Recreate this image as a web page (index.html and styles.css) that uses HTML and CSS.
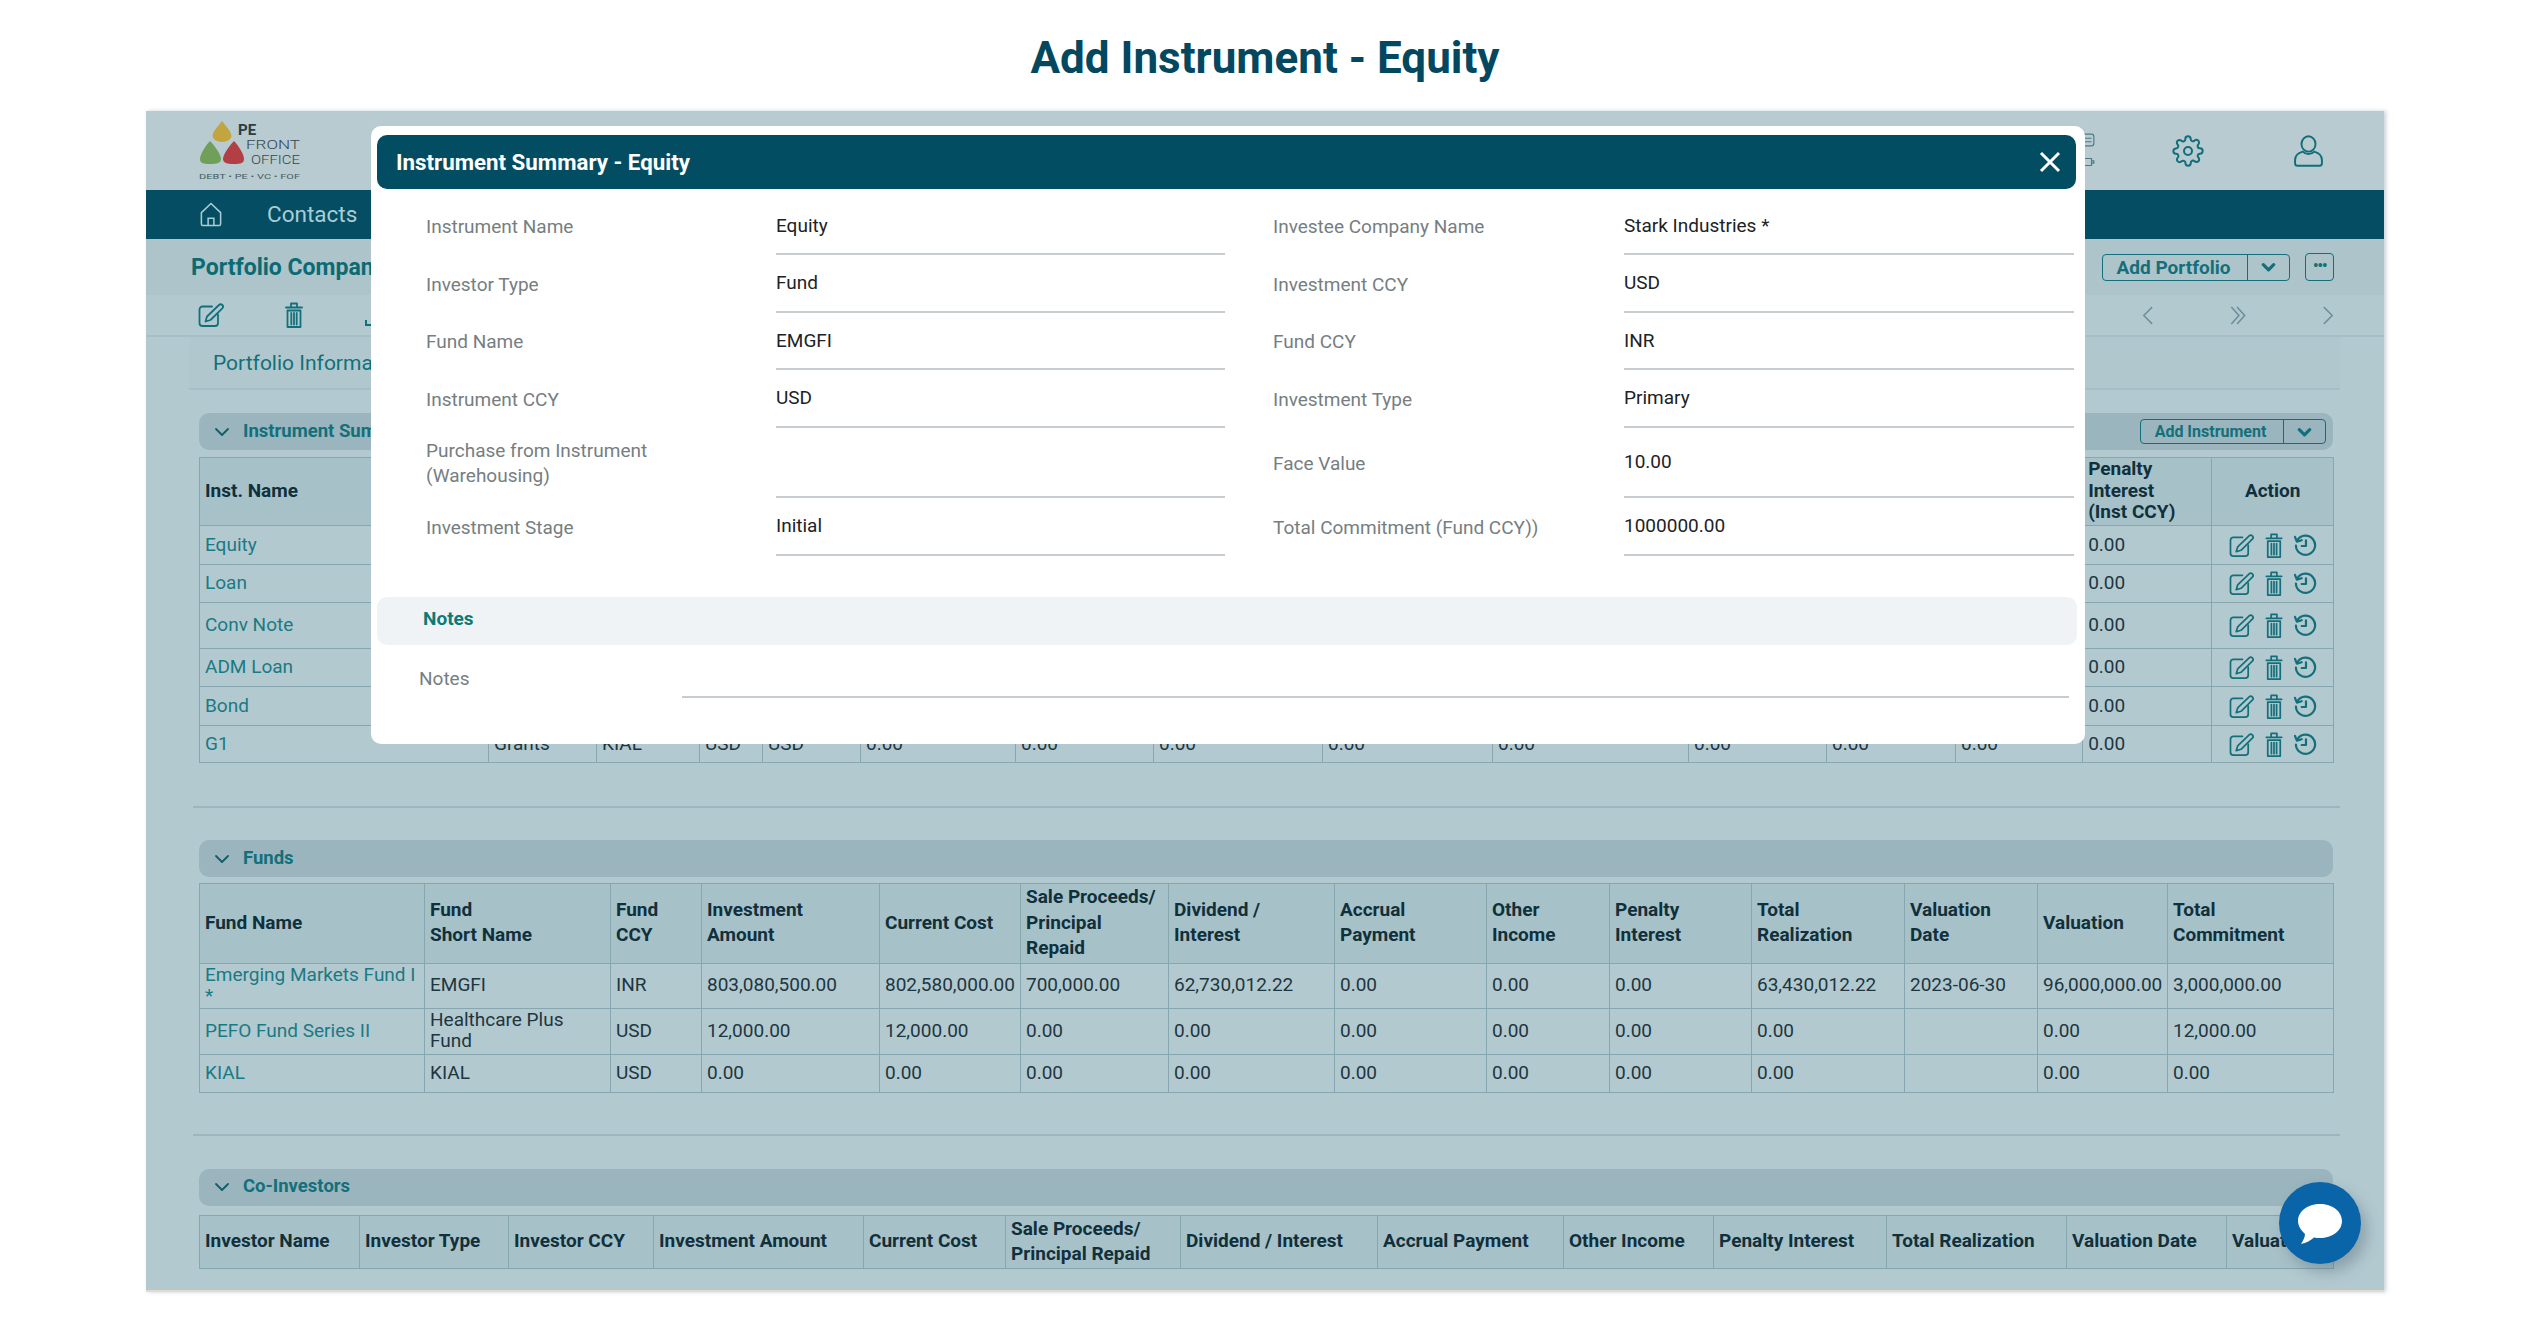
FILE: index.html
```html
<!DOCTYPE html>
<html lang="en">
<head>
  <meta charset="UTF-8">
  <title>Add Instrument - Equity</title>
  <link rel="stylesheet" href="styles.css">
</head>
<body>

  <svg class="sprites" width="0" height="0">
    <symbol id="i-edit" viewBox="0 0 26 24">
      <path d="M14 3.5H4.5A3 3 0 0 0 1.500 6.500V20a3 3 0 0 0 3 3H17a3 3 0 0 0 3-3v-8.500"/>
      <path d="M21 2a2.300 2.300 0 0 1 3.300 3.300L12.500 17l-5 1.500L9 13.500z"/>
    </symbol>
    <symbol id="i-trash" viewBox="0 0 18 26">
      <path d="M1 5.500h16M6 5V1.500h6V5"/>
      <path d="M2.500 8.500h13V25h-13zM6.300 11v11.500M9 11v11.500M11.700 11v11.500"/>
    </symbol>
    <symbol id="i-history" viewBox="0 0 24 24">
      <path d="M3.500 6.500A10 10 0 1 1 2 12"/>
      <path d="M1 3l2 5 5-1.500" />
      <path d="M12.500 6.500v6H8"/>
    </symbol>
    <symbol id="i-chevron" viewBox="0 0 16 10">
      <path d="M2 2l6 6 6-6"/>
    </symbol>
    <symbol id="i-chevron-bold" viewBox="0 0 16 10">
      <path d="M2.500 2.500L8 8l5.500-5.500"/>
    </symbol>
  </svg>

  <h1 class="page-title">Add Instrument - Equity</h1>

  <div class="frame">

    <header class="topbar">
      <svg class="logo" viewBox="0 0 102 60">
        <path class="drop-y" d="M23 0c4 5 9.500 11 9.500 15a9.500 6 0 0 1-19 0C13.500 11 19 5 23 0z"/>
        <path class="drop-g" d="M11 20c4 4 11 13 11 18 0 4-4 5-11 5S1 42 1 38c0-5 6-14 10-18z"/>
        <path class="drop-r" d="M35 20c4 4 10 13 10 18 0 4-3 5-10 5s-11-1-11-5c0-5 7-14 11-18z"/>
        <text class="logo-pe" x="39" y="14">PE</text>
        <text class="logo-word" x="47" y="28" textLength="54" lengthAdjust="spacingAndGlyphs">FRONT</text>
        <text class="logo-word" x="52" y="43" textLength="49" lengthAdjust="spacingAndGlyphs">OFFICE</text>
        <text class="logo-tag" x="0" y="58" textLength="101" lengthAdjust="spacingAndGlyphs">DEBT • PE • VC • FOF</text>
      </svg>
      <div class="top-icons">
        <div class="peek-icons">
          <svg viewBox="0 0 12 12"><rect x="1" y="1" width="10" height="10" rx="2"/><path d="M3 4.500h6M3 7.500h6"/></svg>
          <svg viewBox="0 0 12 12"><path d="M2 3h7v6H2zM9 5h2v2H9z"/></svg>
        </div>
        <svg class="top-icon gear" viewBox="0 0 24 24">
          <circle cx="12" cy="12" r="3"/>
          <path d="M19.400 15a1.650 1.650 0 0 0 .33 1.820l.06.06a2 2 0 0 1 0 2.830 2 2 0 0 1-2.830 0l-.06-.06a1.650 1.650 0 0 0-1.820-.33 1.650 1.650 0 0 0-1 1.510V21a2 2 0 0 1-2 2 2 2 0 0 1-2-2v-.09A1.650 1.650 0 0 0 9 19.400a1.650 1.650 0 0 0-1.820.33l-.06.06a2 2 0 0 1-2.830 0 2 2 0 0 1 0-2.830l.06-.06a1.650 1.650 0 0 0 .33-1.820 1.650 1.650 0 0 0-1.510-1H3a2 2 0 0 1-2-2 2 2 0 0 1 2-2h.09A1.650 1.650 0 0 0 4.600 9a1.650 1.650 0 0 0-.33-1.820l-.06-.06a2 2 0 0 1 0-2.830 2 2 0 0 1 2.830 0l.06.06a1.650 1.650 0 0 0 1.820.33H9a1.650 1.650 0 0 0 1-1.510V3a2 2 0 0 1 2-2 2 2 0 0 1 2 2v.09a1.650 1.650 0 0 0 1 1.510 1.650 1.650 0 0 0 1.820-.33l.06-.06a2 2 0 0 1 2.830 0 2 2 0 0 1 0 2.830l-.06.06a1.650 1.650 0 0 0-.33 1.820V9a1.650 1.650 0 0 0 1.510 1H21a2 2 0 0 1 2 2 2 2 0 0 1-2 2h-.09a1.650 1.650 0 0 0-1.510 1z"/>
        </svg>
        <svg class="top-icon user" viewBox="0 0 24 25">
          <ellipse cx="12" cy="7" rx="5.500" ry="6"/>
          <path d="M7.500 13C4 14 1.500 16 1.500 19.500V22a2 2 0 0 0 2 2h17a2 2 0 0 0 2-2v-2.500C22.500 16 20 14 16.500 13c-2.500 2.500-6.500 2.500-9 0z"/>
        </svg>
      </div>
    </header>

    <nav class="navbar">
      <svg class="home" viewBox="0 0 24 26">
        <path d="M12 1.500L2 11v12a1.500 1.500 0 0 0 1.500 1.500h17A1.500 1.500 0 0 0 22 23V11z"/>
        <path d="M9 24.500V17h6v7.500"/>
      </svg>
      <a class="nav-link">Contacts</a>
    </nav>

    <div class="pagebar">
      <h2 class="page-name">Portfolio Company</h2>
      <div class="page-actions">
        <div class="split-btn">
          <span class="split-label">Add Portfolio</span>
          <span class="split-arrow"><svg><use href="#i-chevron-bold"/></svg></span>
        </div>
        <div class="more-btn">•••</div>
      </div>
    </div>

    <div class="toolbar">
      <div class="tool-left">
        <svg class="tool-edit"><use href="#i-edit"/></svg>
        <svg class="tool-trash"><use href="#i-trash"/></svg>
        <svg class="tool-upload" viewBox="0 0 24 24"><path d="M2 17v5h20v-5M12 2v14"/></svg>
      </div>
      <div class="pager">
        <svg viewBox="0 0 14 22"><path d="M12 2L3 11l9 9"/></svg>
        <svg viewBox="0 0 18 22"><path d="M2 2l8 9-8 9M8 2l8 9-8 9"/></svg>
        <svg viewBox="0 0 14 22"><path d="M2 2l9 9-9 9"/></svg>
      </div>
    </div>

    <div class="tab-card">Portfolio Information</div>

    <section class="section first">
      <div class="section-head">
        <svg class="chev"><use href="#i-chevron"/></svg>
        <span class="section-title">Instrument Summary</span>
        <div class="split-btn small">
          <span class="split-label">Add Instrument</span>
          <span class="split-arrow"><svg><use href="#i-chevron-bold"/></svg></span>
        </div>
      </div>
      <table class="grid inst">
        <colgroup><col><col><col><col><col><col><col><col><col><col><col><col><col><col><col></colgroup>
        <thead>
          <tr><th>Inst. Name</th><th colspan="12"></th><th>Penalty<br>Interest<br>(Inst CCY)</th><th class="center">Action</th></tr>
        </thead>
        <tbody>
          <tr><td><a>Equity</a></td><td colspan="12"></td><td>0.00</td><td><div class="acts"><svg class="a-edit"><use href="#i-edit"/></svg><svg class="a-trash"><use href="#i-trash"/></svg><svg class="a-hist"><use href="#i-history"/></svg></div></td></tr>
          <tr><td><a>Loan</a></td><td colspan="12"></td><td>0.00</td><td><div class="acts"><svg class="a-edit"><use href="#i-edit"/></svg><svg class="a-trash"><use href="#i-trash"/></svg><svg class="a-hist"><use href="#i-history"/></svg></div></td></tr>
          <tr><td><a>Conv Note</a></td><td colspan="12"></td><td>0.00</td><td><div class="acts"><svg class="a-edit"><use href="#i-edit"/></svg><svg class="a-trash"><use href="#i-trash"/></svg><svg class="a-hist"><use href="#i-history"/></svg></div></td></tr>
          <tr><td><a>ADM Loan</a></td><td colspan="12"></td><td>0.00</td><td><div class="acts"><svg class="a-edit"><use href="#i-edit"/></svg><svg class="a-trash"><use href="#i-trash"/></svg><svg class="a-hist"><use href="#i-history"/></svg></div></td></tr>
          <tr><td><a>Bond</a></td><td colspan="12"></td><td>0.00</td><td><div class="acts"><svg class="a-edit"><use href="#i-edit"/></svg><svg class="a-trash"><use href="#i-trash"/></svg><svg class="a-hist"><use href="#i-history"/></svg></div></td></tr>
          <tr><td><a>G1</a></td><td>Grants</td><td>KIAL</td><td>USD</td><td>USD</td><td>0.00</td><td>0.00</td><td>0.00</td><td>0.00</td><td>0.00</td><td>0.00</td><td>0.00</td><td>0.00</td><td>0.00</td><td><div class="acts"><svg class="a-edit"><use href="#i-edit"/></svg><svg class="a-trash"><use href="#i-trash"/></svg><svg class="a-hist"><use href="#i-history"/></svg></div></td></tr>
        </tbody>
      </table>
    </section>

    <hr class="divider one">

    <section class="section">
      <div class="section-head">
        <svg class="chev"><use href="#i-chevron"/></svg>
        <span class="section-title">Funds</span>
      </div>
      <table class="grid funds">
        <colgroup><col><col><col><col><col><col><col><col><col><col><col><col><col><col></colgroup>
        <thead>
          <tr>
            <th>Fund Name</th><th>Fund<br>Short Name</th><th>Fund<br>CCY</th><th>Investment<br>Amount</th><th>Current Cost</th><th>Sale Proceeds/<br>Principal<br>Repaid</th><th>Dividend /<br>Interest</th><th>Accrual<br>Payment</th><th>Other<br>Income</th><th>Penalty<br>Interest</th><th>Total<br>Realization</th><th>Valuation<br>Date</th><th>Valuation</th><th>Total<br>Commitment</th>
          </tr>
        </thead>
        <tbody>
          <tr><td><a>Emerging Markets Fund I *</a></td><td>EMGFI</td><td>INR</td><td>803,080,500.00</td><td>802,580,000.00</td><td>700,000.00</td><td>62,730,012.22</td><td>0.00</td><td>0.00</td><td>0.00</td><td>63,430,012.22</td><td>2023-06-30</td><td>96,000,000.00</td><td>3,000,000.00</td></tr>
          <tr><td><a>PEFO Fund Series II</a></td><td>Healthcare Plus Fund</td><td>USD</td><td>12,000.00</td><td>12,000.00</td><td>0.00</td><td>0.00</td><td>0.00</td><td>0.00</td><td>0.00</td><td>0.00</td><td></td><td>0.00</td><td>12,000.00</td></tr>
          <tr><td><a>KIAL</a></td><td>KIAL</td><td>USD</td><td>0.00</td><td>0.00</td><td>0.00</td><td>0.00</td><td>0.00</td><td>0.00</td><td>0.00</td><td>0.00</td><td></td><td>0.00</td><td>0.00</td></tr>
        </tbody>
      </table>
    </section>

    <hr class="divider two">

    <section class="section">
      <div class="section-head">
        <svg class="chev"><use href="#i-chevron"/></svg>
        <span class="section-title">Co-Investors</span>
      </div>
      <table class="grid coinv">
        <colgroup><col><col><col><col><col><col><col><col><col><col><col><col><col></colgroup>
        <thead>
          <tr>
            <th>Investor Name</th><th>Investor Type</th><th>Investor CCY</th><th>Investment Amount</th><th>Current Cost</th><th>Sale Proceeds/<br>Principal Repaid</th><th>Dividend / Interest</th><th>Accrual Payment</th><th>Other Income</th><th>Penalty Interest</th><th>Total Realization</th><th>Valuation Date</th><th>Valuation</th>
          </tr>
        </thead>
      </table>
    </section>

    <div class="modal">
      <div class="modal-head">
        <span class="modal-title">Instrument Summary - Equity</span>
        <svg class="modal-close" viewBox="0 0 22 22"><path d="M2 2l18 18M20 2L2 20"/></svg>
      </div>
      <div class="form">
        <div class="field"><label>Instrument Name</label><div class="value">Equity</div></div>
        <div class="field"><label>Investee Company Name</label><div class="value">Stark Industries *</div></div>
        <div class="field"><label>Investor Type</label><div class="value">Fund</div></div>
        <div class="field"><label>Investment CCY</label><div class="value">USD</div></div>
        <div class="field"><label>Fund Name</label><div class="value">EMGFI</div></div>
        <div class="field"><label>Fund CCY</label><div class="value">INR</div></div>
        <div class="field"><label>Instrument CCY</label><div class="value">USD</div></div>
        <div class="field"><label>Investment Type</label><div class="value">Primary</div></div>
        <div class="field"><label>Purchase from Instrument<br>(Warehousing)</label><div class="value"></div></div>
        <div class="field"><label>Face Value</label><div class="value">10.00</div></div>
        <div class="field"><label>Investment Stage</label><div class="value">Initial</div></div>
        <div class="field"><label>Total Commitment (Fund CCY))</label><div class="value">1000000.00</div></div>
      </div>
      <div class="notes-bar">Notes</div>
      <div class="notes-row"><label>Notes</label><div class="notes-line"></div></div>
    </div>

    <div class="chat-btn">
      <svg viewBox="0 0 44 44"><path d="M22 3c12 0 22 7 22 17s-10 17-22 17c-2 0-4 0-6-.6C13 39 8 42 3 43c2-3 4-7 4-10C3 29 0 25 0 20 0 10 10 3 22 3z"/></svg>
    </div>
  </div>

</body>
</html>
```
FILE: styles.css
```css
* {
  box-sizing: border-box;
}

body {
  margin: 0;
  height: 1330px;
  overflow: hidden;
  background: #fff;
  font-family: Roboto, "Liberation Sans", sans-serif;
  font-size: 19px;
  color: #1d3640;
}

.sprites {
  position: absolute;
}

symbol path,
symbol circle {
  fill: none;
  stroke: currentColor;
  stroke-width: 1.8;
  stroke-linejoin: round;
  stroke-linecap: round;
}

#i-history path {
  stroke-width: 2.3;
}

#i-chevron-bold path {
  stroke-width: 3.4;
}

.page-title {
  margin: 0;
  height: 111px;
  padding-top: 33px;
  text-align: center;
  font-size: 44px;
  line-height: 50px;
  font-weight: 700;
  color: #03485f;
}

.frame {
  position: relative;
  width: 2238px;
  height: 1181px;
  margin-left: 146px;
  overflow: hidden;
  background: #b3c9d0;
  border-bottom: 2px solid #e3dacb;
  box-shadow: 2px 0 4px rgba(120, 140, 150, 0.4);
}

/* top header */
.topbar {
  display: flex;
  justify-content: space-between;
  align-items: center;
  height: 79px;
  padding: 0 60px 0 53px;
  background: #b7cbd1;
}

.logo {
  width: 102px;
  height: 60px;
}

.drop-y { fill: #c2a53f; }
.drop-g { fill: #6f9f59; }
.drop-r { fill: #b23f44; }

.logo-pe {
  font-size: 15px;
  font-weight: 700;
  fill: #2b3d44;
}

.logo-word {
  font-size: 13px;
  font-weight: 300;
  fill: #33474e;
}

.logo-tag {
  font-size: 7px;
  fill: #485c63;
}

.top-icons {
  display: flex;
  align-items: center;
}

.peek-icons {
  display: flex;
  flex-direction: column;
  gap: 8px;
  margin-right: 77px;
}

.peek-icons svg {
  width: 14px;
  height: 14px;
  fill: none;
  stroke: #4c7d87;
  stroke-width: 1;
}

.top-icon {
  fill: none;
  stroke: #116e78;
  stroke-width: 1.5;
}

.gear {
  width: 32px;
  height: 32px;
  margin-right: 89px;
}

.user {
  width: 31px;
  height: 32px;
}

/* nav */
.navbar {
  display: flex;
  align-items: center;
  height: 49px;
  padding-left: 53px;
  background: #044d63;
}

.home {
  width: 24px;
  height: 25px;
  fill: none;
  stroke: #a9cdd4;
  stroke-width: 1.6;
}

.nav-link {
  margin-left: 44px;
  padding-bottom: 1px;
  font-size: 22.5px;
  color: #a9cdd4;
}

/* page bar */
.pagebar {
  display: flex;
  justify-content: space-between;
  align-items: center;
  height: 56px;
  padding: 0 50px 0 45px;
  background: #adc4cb;
}

.page-name {
  margin: 0;
  font-size: 23px;
  font-weight: 700;
  color: #0b6b72;
}

.page-actions {
  display: flex;
  align-items: center;
  gap: 15px;
}

.split-btn {
  display: flex;
  align-items: stretch;
  width: 188px;
  height: 27px;
  border: 1px solid #13707a;
  border-radius: 4px;
  font-weight: 700;
  font-size: 19px;
  color: #13707a;
}

.split-label {
  width: 145px;
  padding-right: 3px;
  border-right: 1px solid #13707a;
  text-align: center;
  line-height: 25px;
}

.split-arrow {
  display: flex;
  flex: 1;
  align-items: center;
  justify-content: center;
}

.split-arrow svg {
  width: 15px;
  height: 10px;
  color: #13707a;
}

.split-btn.small {
  width: 186px;
  height: 25px;
  margin-left: auto;
  margin-right: 7px;
  font-size: 16px;
}

.small .split-label {
  width: 143px;
  line-height: 23px;
}

.more-btn {
  width: 29px;
  height: 28px;
  border: 1px solid #13707a;
  border-radius: 4px;
  text-align: center;
  font-size: 18px;
  line-height: 24px;
  letter-spacing: -1.5px;
  white-space: nowrap;
  color: #13707a;
}

/* toolbar */
.toolbar {
  display: flex;
  justify-content: space-between;
  align-items: center;
  height: 42px;
  padding: 0 49px 0 52px;
  border-bottom: 2px solid #a6bec6;
}

.tool-left {
  display: flex;
  align-items: center;
  gap: 61px;
  color: #13707a;
}

.tool-edit {
  width: 26px;
  height: 24px;
}

.tool-trash {
  width: 18px;
  height: 26px;
}

.tool-upload {
  width: 24px;
  height: 24px;
  fill: none;
  stroke: currentColor;
  stroke-width: 2;
}

.pager {
  display: flex;
  align-items: center;
  gap: 75px;
}

.pager svg {
  width: 13px;
  height: 21px;
  fill: none;
  stroke: #6b8f99;
  stroke-width: 1.6;
}

.pager svg:nth-child(2) {
  width: 18px;
}

.tab-card {
  width: 2151px;
  height: 53px;
  margin-left: 43px;
  padding: 14px 0 0 24px;
  background: #b0c7ce;
  border-bottom: 2px solid #a6bec6;
  font-size: 21px;
  color: #12707a;
}

/* sections */
.section {
  width: 2134px;
  margin-left: 53px;
}

.section.first {
  margin-top: 23px;
}

.section-head {
  display: flex;
  align-items: center;
  height: 37px;
  padding-left: 15px;
  background: #9ab5be;
  border-radius: 10px;
  color: #12707a;
}

.chev {
  width: 16px;
  height: 10px;
  margin-right: 13px;
  color: #0f5e68;
}

.section-title {
  padding-bottom: 2px;
  font-size: 18.5px;
  font-weight: 700;
}

.divider {
  width: 2147px;
  height: 2px;
  margin: 0 0 0 47px;
  border: none;
  background: #9db6be;
}

.divider.one {
  margin-top: 43px;
  margin-bottom: 32px;
}

.divider.two {
  margin-top: 41px;
  margin-bottom: 33px;
}

/* tables */
.grid {
  table-layout: fixed;
  border-collapse: collapse;
  width: 2134px;
  margin-top: 6px;
}

.grid th,
.grid td {
  padding: 0 5px 2px;
  border: 1px solid #86a6b0;
  vertical-align: middle;
  text-align: left;
  overflow: hidden;
}

.grid th {
  background: #a7c1c9;
  font-weight: 700;
  line-height: 25.500px;
  color: #10303b;
}

.grid td {
  line-height: 21px;
}

.grid a {
  color: #1a7a83;
}

.grid th.center {
  text-align: center;
}

.inst {
  margin-top: 7px;
}

.inst th {
  height: 68px;
  line-height: 21.500px;
}

.inst tbody tr:nth-child(1) td { height: 39px; }
.inst tbody tr:nth-child(2) td { height: 38px; }
.inst tbody tr:nth-child(3) td { height: 46px; }
.inst tbody tr:nth-child(4) td { height: 38px; }
.inst tbody tr:nth-child(5) td { height: 39px; }
.inst tbody tr:nth-child(6) td { height: 37px; }

.inst col:nth-child(1) { width: 289px; }
.inst col:nth-child(2) { width: 108px; }
.inst col:nth-child(3) { width: 103px; }
.inst col:nth-child(4) { width: 63px; }
.inst col:nth-child(5) { width: 98px; }
.inst col:nth-child(6) { width: 155px; }
.inst col:nth-child(7) { width: 138px; }
.inst col:nth-child(8) { width: 169px; }
.inst col:nth-child(9) { width: 170px; }
.inst col:nth-child(10) { width: 196px; }
.inst col:nth-child(11) { width: 138px; }
.inst col:nth-child(12) { width: 129px; }
.inst col:nth-child(13) { width: 127px; }
.inst col:nth-child(14) { width: 129px; }
.inst col:nth-child(15) { width: 122px; }

.acts {
  display: flex;
  align-items: center;
  justify-content: center;
  gap: 11px;
  height: 25px;
  margin-top: 2px;
  color: #13707a;
}

.a-edit {
  width: 25px;
  height: 23px;
}

.a-trash {
  width: 18px;
  height: 25px;
}

.a-hist {
  width: 23px;
  height: 23px;
}

.funds th {
  height: 78px;
}

.funds tbody tr:nth-child(1) td { height: 45px; }
.funds tbody tr:nth-child(2) td { height: 46px; }
.funds tbody tr:nth-child(3) td { height: 38px; }

.funds col:nth-child(1) { width: 225px; }
.funds col:nth-child(2) { width: 186px; }
.funds col:nth-child(3) { width: 91px; }
.funds col:nth-child(4) { width: 178px; }
.funds col:nth-child(5) { width: 141px; }
.funds col:nth-child(6) { width: 148px; }
.funds col:nth-child(7) { width: 166px; }
.funds col:nth-child(8) { width: 152px; }
.funds col:nth-child(9) { width: 123px; }
.funds col:nth-child(10) { width: 142px; }
.funds col:nth-child(11) { width: 153px; }
.funds col:nth-child(12) { width: 133px; }
.funds col:nth-child(13) { width: 130px; }
.funds col:nth-child(14) { width: 166px; }

.coinv {
  margin-top: 9px;
}

.coinv th {
  height: 52px;
  white-space: nowrap;
  line-height: 25px;
}

.coinv col:nth-child(1) { width: 160px; }
.coinv col:nth-child(2) { width: 149px; }
.coinv col:nth-child(3) { width: 145px; }
.coinv col:nth-child(4) { width: 210px; }
.coinv col:nth-child(5) { width: 142px; }
.coinv col:nth-child(6) { width: 175px; }
.coinv col:nth-child(7) { width: 197px; }
.coinv col:nth-child(8) { width: 186px; }
.coinv col:nth-child(9) { width: 150px; }
.coinv col:nth-child(10) { width: 173px; }
.coinv col:nth-child(11) { width: 180px; }
.coinv col:nth-child(12) { width: 160px; }
.coinv col:nth-child(13) { width: 107px; }

/* modal */
.modal {
  position: absolute;
  top: 15px;
  left: 225px;
  width: 1714px;
  height: 618px;
  padding-top: 9px;
  background: #fff;
  border-radius: 10px;
}

.modal-head {
  display: flex;
  justify-content: space-between;
  align-items: center;
  height: 54px;
  margin: 0 9px 0 6px;
  padding: 0 15px 0 19px;
  background: #034d63;
  border-radius: 10px;
}

.modal-title {
  padding-bottom: 1px;
  font-size: 22.3px;
  font-weight: 700;
  color: #fff;
}

.modal-close {
  width: 22px;
  height: 22px;
  fill: none;
  stroke: #fff;
  stroke-width: 3;
}

.form {
  display: grid;
  grid-template-columns: 799px 801px;
  grid-auto-rows: 58px;
  grid-template-rows: 57px 58px 57px 58px 70px 58px;
  column-gap: 48px;
  margin: 9px 0 0 55px;
}

.field {
  display: grid;
  grid-template-columns: 350px 1fr;
  align-items: center;
  font-size: 19px;
}

.field:nth-child(even) {
  grid-template-columns: 351px 1fr;
}

.field label {
  line-height: 25px;
  color: #767e82;
}

.value {
  display: flex;
  align-items: center;
  align-self: stretch;
  padding-bottom: 1px;
  border-bottom: 2px solid #c6ccd0;
  color: #1c2226;
}

.notes-bar {
  height: 48px;
  margin: 41px 8px 0 6px;
  padding: 10px 0 0 46px;
  background: #eff3f5;
  border-radius: 10px;
  font-weight: 700;
  line-height: 24px;
  color: #0c7a76;
}

.notes-row {
  display: flex;
  height: 53px;
  margin: 0 16px 0 48px;
}

.notes-row label {
  width: 263px;
  padding-top: 22px;
  line-height: 24px;
  color: #767e82;
}

.notes-line {
  flex: 1;
  border-bottom: 2px solid #c6ccd0;
}

/* chat */
.chat-btn {
  position: absolute;
  top: 1071px;
  left: 2133px;
  display: flex;
  align-items: center;
  justify-content: center;
  width: 82px;
  height: 82px;
  background: #0a64a8;
  border-radius: 50%;
  box-shadow: 6px 8px 14px rgba(70, 90, 100, 0.35);
}

.chat-btn svg {
  width: 44px;
  height: 44px;
  fill: #fff;
}
```
